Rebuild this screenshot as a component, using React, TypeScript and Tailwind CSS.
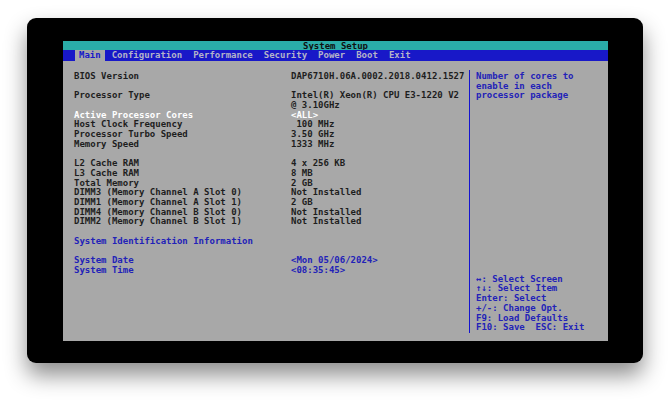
import React from "react";

type Row = { label: string; value?: string; cls?: string };

const rows: (Row | null)[] = [
  { label: "BIOS Version", value: "DAP6710H.06A.0002.2018.0412.1527" },
  null,
  { label: "Processor Type", value: "Intel(R) Xeon(R) CPU E3-1220 V2" },
  { label: "", value: "@ 3.10GHz" },
  { label: "Active Processor Cores", value: "<ALL>", cls: "text-white" },
  { label: "Host Clock Frequency", value: " 100 MHz" },
  { label: "Processor Turbo Speed", value: "3.50 GHz" },
  { label: "Memory Speed", value: "1333 MHz" },
  null,
  { label: "L2 Cache RAM", value: "4 x 256 KB" },
  { label: "L3 Cache RAM", value: "8 MB" },
  { label: "Total Memory", value: "2 GB" },
  { label: "DIMM3 (Memory Channel A Slot 0)", value: "Not Installed" },
  { label: "DIMM1 (Memory Channel A Slot 1)", value: "2 GB" },
  { label: "DIMM4 (Memory Channel B Slot 0)", value: "Not Installed" },
  { label: "DIMM2 (Memory Channel B Slot 1)", value: "Not Installed" },
  null,
  { label: "System Identification Information", cls: "text-[#2222b8]" },
  null,
  { label: "System Date", value: "<Mon 05/06/2024>", cls: "text-[#2222b8]" },
  { label: "System Time", value: "<08:35:45>", cls: "text-[#2222b8]" },
];

const tabs = ["Configuration", "Performance", "Security", "Power", "Boot", "Exit"];

const keys = [
  "\u2194: Select Screen",
  "\u2191\u2193: Select Item",
  "Enter: Select",
  "+/-: Change Opt.",
  "F9: Load Defaults",
  "F10: Save  ESC: Exit",
];

export default function App() {
  return (
    <div className="w-[670px] h-[400px] bg-white pt-[18px] pl-[27px]">
      <div className="w-[616px] h-[345px] rounded-[9px] bg-black pt-[23px] pl-[36px] shadow-[0_12px_22px_rgba(0,0,0,0.45)]">
        <div
          className="w-[545px] h-[300px] bg-[#a8a8a8] flex flex-col text-[9px] leading-[9.7px] text-[#1e1e1e] whitespace-pre font-semibold"
          style={{ fontFamily: '"DejaVu Sans Mono", "Liberation Mono", monospace' }}
        >
          {/* Title bar */}
          <div className="h-[9px] bg-[#2aaca8] flex items-center justify-center font-bold text-[#101010] leading-[9px] pt-[1px]">
            System Setup
          </div>
          {/* Menu bar */}
          <div className="h-[11px] bg-[#1818c8] flex items-center pl-[12px] text-[#b4b4c8] font-bold leading-[11px]">
            <span className="bg-[#a8a8a8] text-[#1818c8] px-[4px] h-[11px]">Main</span>
            <div className="flex gap-[11px] ml-[7px]">
              {tabs.map((t) => (
                <span key={t}>{t}</span>
              ))}
            </div>
          </div>
          {/* Body */}
          <div className="flex flex-1 pt-[9px]">
            <div className="w-[406px] pl-[11px] pt-[2px] flex flex-col">
              {rows.map((r, i) =>
                r ? (
                  <div key={i} className={`flex h-[9.7px] ${r.cls ?? ""}`}>
                    <span className="w-[217px]">{r.label}</span>
                    <span>{r.value ?? ""}</span>
                  </div>
                ) : (
                  <div key={i} className="h-[9.7px]" />
                )
              )}
            </div>
            <div className="w-[1px] h-[263px] bg-[#1414d0]" />
            <div className="pl-[6px] pt-[2px] flex flex-col justify-between h-[263px] text-[#2222b8]">
              <div className="flex flex-col">
                <span>Number of cores to</span>
                <span>enable in each</span>
                <span>processor package</span>
              </div>
              <div className="flex flex-col">
                {keys.map((k) => (
                  <span key={k}>{k}</span>
                ))}
              </div>
            </div>
          </div>
        </div>
      </div>
    </div>
  );
}
